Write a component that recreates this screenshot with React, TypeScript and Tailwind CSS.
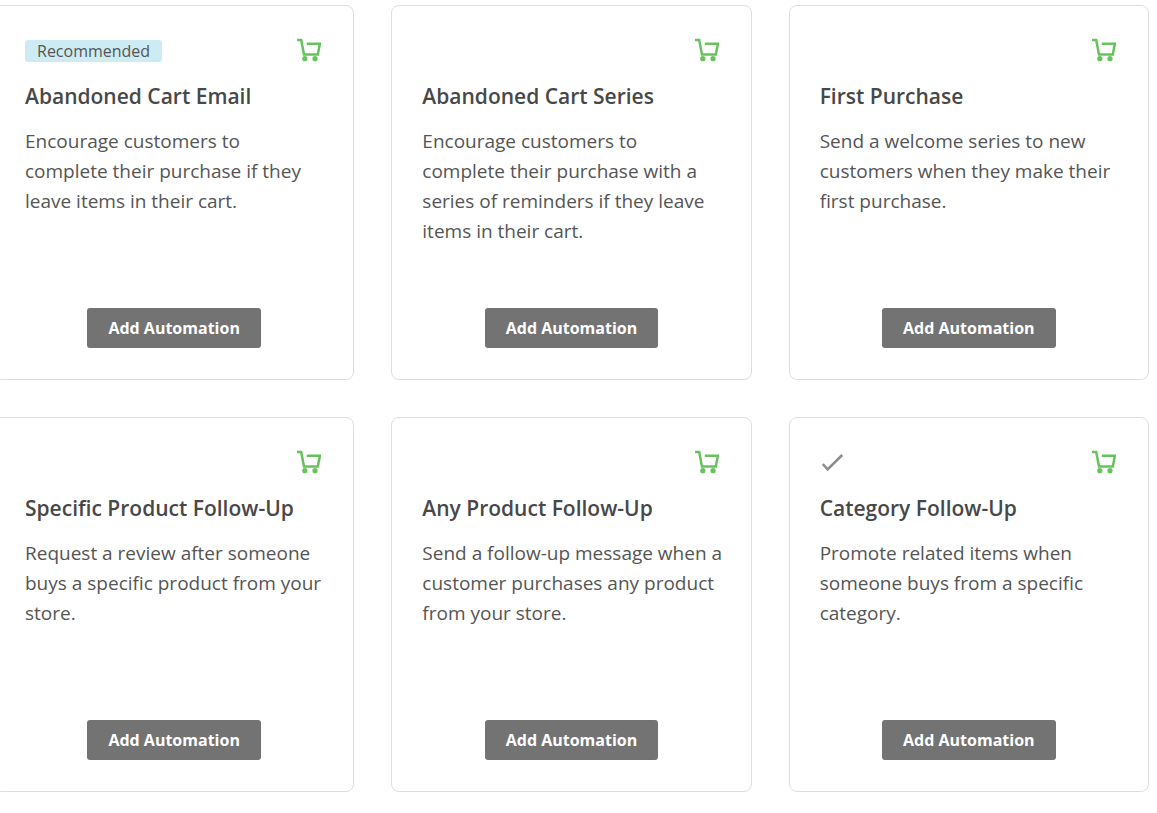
type Automation = {
  title: string;
  description: string;
  recommended?: boolean;
  active?: boolean;
};

const automations: Automation[] = [
  {
    title: "Abandoned Cart Email",
    description:
      "Encourage customers to complete their purchase if they leave items in their cart.",
    recommended: true,
  },
  {
    title: "Abandoned Cart Series",
    description:
      "Encourage customers to complete their purchase with a series of reminders if they leave items in their cart.",
  },
  {
    title: "First Purchase",
    description:
      "Send a welcome series to new customers when they make their first purchase.",
  },
  {
    title: "Specific Product Follow-Up",
    description:
      "Request a review after someone buys a specific product from your store.",
  },
  {
    title: "Any Product Follow-Up",
    description:
      "Send a follow-up message when a customer purchases any product from your store.",
  },
  {
    title: "Category Follow-Up",
    description:
      "Promote related items when someone buys from a specific category.",
    active: true,
  },
];

function CartIcon() {
  return (
    <svg
      className="mr-0.5 ml-auto size-6 text-[#66c35c]"
      viewBox="0 0 24 24"
      fill="none"
      aria-hidden="true"
    >
      <path
        d="M0 1.9H4.2L7 16.4H20.8L22.9 5.7H9.8"
        stroke="currentColor"
        strokeWidth="2.5"
      />
      <circle cx="7.8" cy="20.7" r="2.6" fill="currentColor" />
      <circle cx="18" cy="20.7" r="2.6" fill="currentColor" />
    </svg>
  );
}

function CheckIcon() {
  return (
    <svg
      className="size-6 text-[#8c8c8c]"
      viewBox="0 0 24 24"
      fill="none"
      role="img"
      aria-label="Added"
    >
      <path d="M2.8 14L7.6 19.4L22.2 5" stroke="currentColor" strokeWidth="2.5" />
    </svg>
  );
}

function AutomationCard({ title, description, recommended, active }: Automation) {
  return (
    <article className="flex min-h-[375px] flex-col rounded-lg border border-[#dedede] bg-white px-[30px] pt-8 pb-[31px]">
      <div className="flex h-6 items-end">
        {recommended && (
          <span className="rounded-[3px] bg-[#cdebf2] px-3 text-base leading-[22px]">
            Recommended
          </span>
        )}
        {active && <CheckIcon />}
        <CartIcon />
      </div>
      <h2 className="mt-5 text-[21px] leading-7 font-semibold text-[#484848]">{title}</h2>
      <p className="-mr-1 mt-4 mb-6 text-[19px] leading-[30px]">{description}</p>
      <button
        type="button"
        className="mt-auto h-10 self-center rounded-[3px] bg-[#737373] px-[21px] text-base font-bold text-white"
      >
        Add Automation
      </button>
    </article>
  );
}

export default function App() {
  return (
    <main className="-ml-1.5 grid grid-cols-3 gap-[37px] bg-white pt-[5px] pr-2 pb-5 font-['Open_Sans',sans-serif] text-[#555]">
      {automations.map((automation) => (
        <AutomationCard key={automation.title} {...automation} />
      ))}
    </main>
  );
}
